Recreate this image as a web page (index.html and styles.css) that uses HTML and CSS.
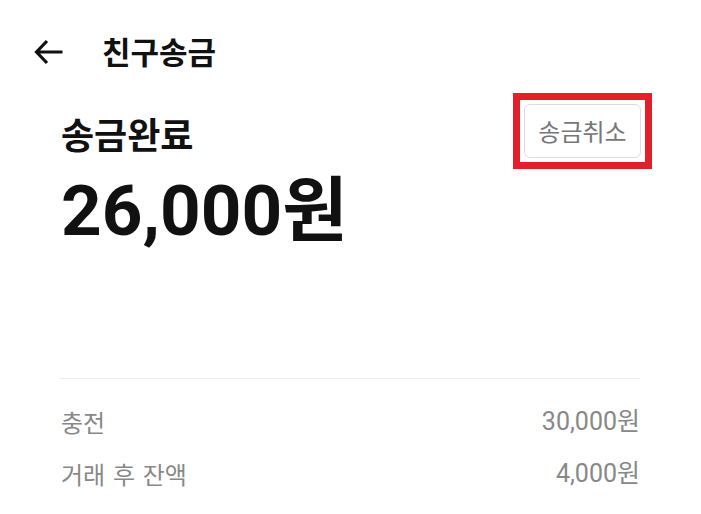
FILE: index.html
```html
<!DOCTYPE html>
<html lang="ko">
<head>
<meta charset="utf-8">
<title>친구송금</title>
<link rel="stylesheet" href="styles.css">
</head>
<body>
<header class="topbar">
  <svg class="back" width="30" height="26" viewBox="0 0 30 26" aria-hidden="true">
    <path d="M2.5 13 H28.5 M13 2 L2.5 13 L13 24" fill="none" stroke="#111" stroke-width="3.2" stroke-linecap="butt" stroke-linejoin="miter"/>
  </svg>
  <h1 class="title">친구송금</h1>
</header>
<main class="content">
  <section class="summary">
    <div class="summary-text">
      <div class="status">송금완료</div>
      <div class="amount">26,000원</div>
    </div>
    <div class="highlight">
      <button class="cancel">송금취소</button>
    </div>
  </section>
  <hr class="divider">
  <ul class="details">
    <li class="row"><span class="label">충전</span><span class="value">30,000원</span></li>
    <li class="row"><span class="label">거래 후 잔액</span><span class="value">4,000원</span></li>
  </ul>
</main>
</body>
</html>
```
FILE: styles.css
```css
html, body {
  margin: 0;
  padding: 0;
  background: #ffffff;
}
body {
  font-family: Roboto, "Noto Sans CJK KR", sans-serif;
  color: #111111;
  width: 701px;
  height: 514px;
  overflow: hidden;
}
.topbar {
  height: 102px;
  display: flex;
  align-items: center;
  padding-left: 34px;
  gap: 38px;
  box-sizing: border-box;
}
.back {
  display: block;
  margin-top: 1px;
}
.title {
  margin: 0;
  font-family: "Noto Sans CJK KR", sans-serif;
  font-size: 31px;
  font-weight: 700;
  line-height: 40px;
  color: #111;
}
.content {
  padding: 0 61px 0 61px;
}
.summary {
  display: flex;
  justify-content: space-between;
  align-items: flex-start;
  padding-top: 2px;
}
.summary-text {
  display: flex;
  flex-direction: column;
  padding-top: 7px;
}
.status {
  font-family: "Noto Sans CJK KR", sans-serif;
  font-size: 36px;
  font-weight: 700;
  line-height: 44px;
  color: #111;
}
.amount {
  margin-top: 16px;
  font-size: 71px;
  font-weight: 700;
  line-height: 80px;
  color: #111;
}
.highlight {
  border: 7px solid #e3202a;
  padding: 4px;
  margin: -11px -12px 0 0;
  line-height: 0;
}
.cancel {
  width: 117px;
  height: 54px;
  background: #fff;
  border: 1px solid #dcdcdc;
  border-radius: 6px;
  font-family: "Noto Sans CJK KR", sans-serif;
  font-size: 24px;
  line-height: 1;
  color: #777777;
  padding: 0;
}
.divider {
  margin: 127px 0 0 -1px;
  border: 0;
  border-top: 1px solid #ececec;
  height: 0;
}
.details {
  list-style: none;
  margin: 17px 0 0 0;
  padding: 0;
}
.row {
  display: flex;
  justify-content: space-between;
  height: 52px;
  line-height: 52px;
  font-size: 24px;
  color: #888888;
}
.label {
  font-family: "Noto Sans CJK KR", sans-serif;
  word-spacing: 1px;
}
.value {
  font-family: Roboto, "Noto Sans CJK KR", sans-serif;
  font-size: 25px;
}
```
